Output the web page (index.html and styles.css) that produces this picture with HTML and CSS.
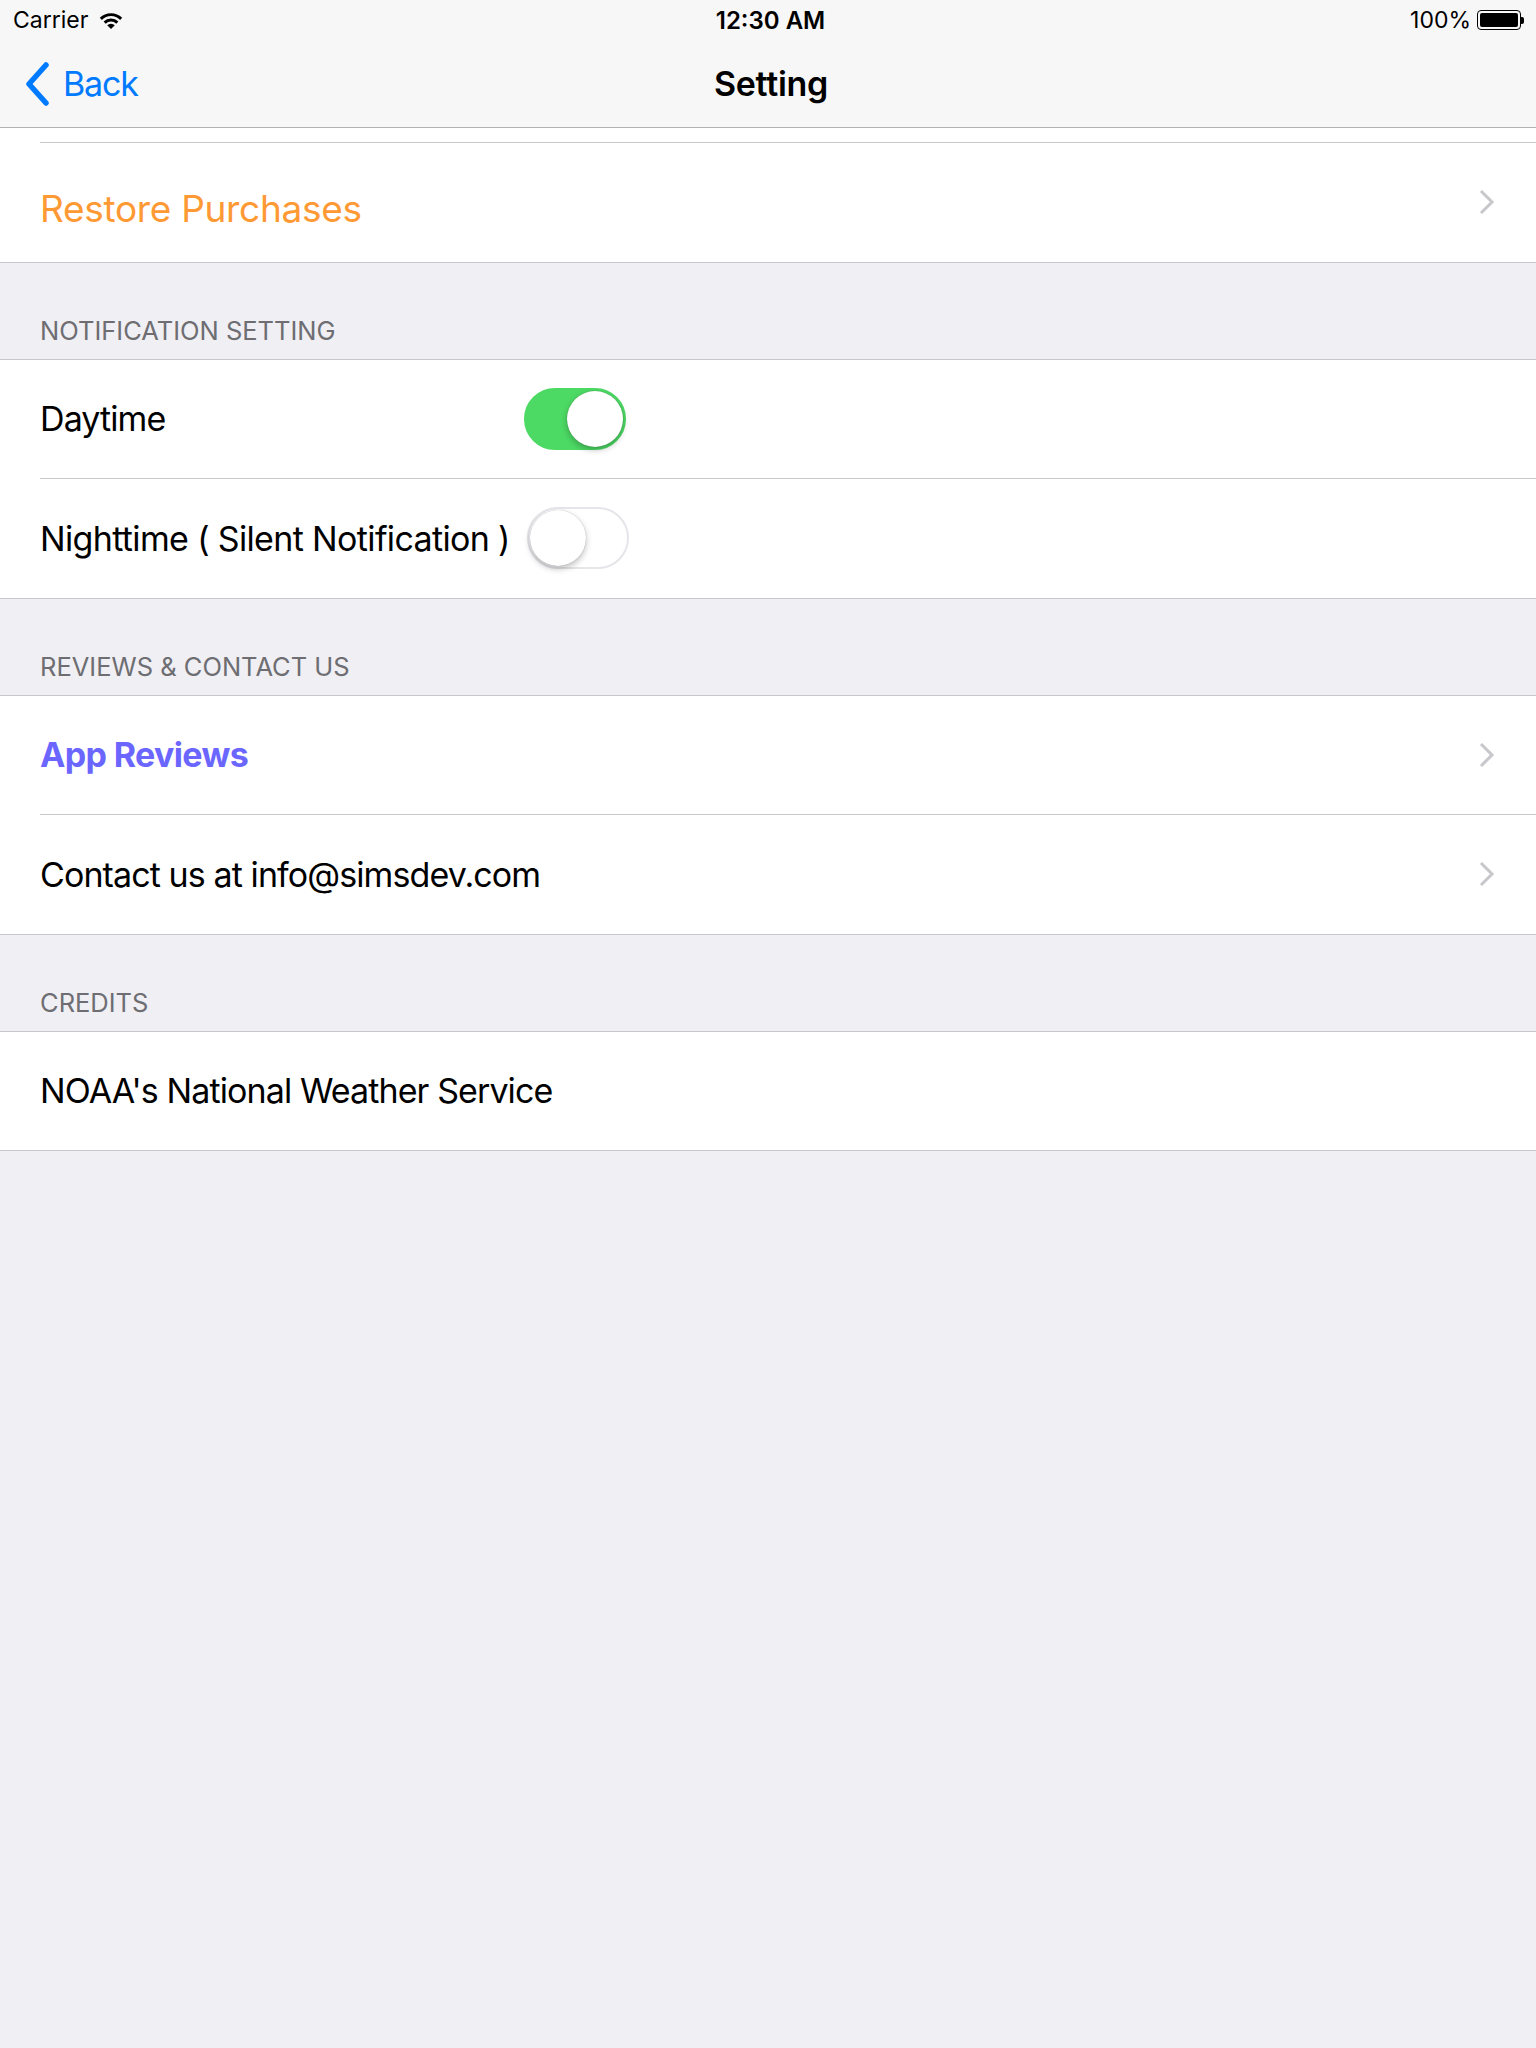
FILE: index.html
```html
<!DOCTYPE html>
<html lang="en">
<head>
    <meta charset="UTF-8">
    <meta name="viewport" content="width=device-width, initial-scale=1.0">
    <title>Setting</title>
    <link rel="stylesheet" href="styles.css">
</head>
<body>
    <div class="status-bar">
        <div class="status-left">
            <span>Carrier</span>
            <svg class="wifi" width="26" height="20" viewBox="0 0 26 20">
                <path d="M13 19 L9.2 15.2 A5.4 5.4 0 0 1 16.8 15.2 Z" fill="#000"/>
                <path d="M5.6 11.6 A10.5 10.5 0 0 1 20.4 11.6 L18.3 13.7 A7.5 7.5 0 0 0 7.7 13.7 Z" fill="#000"/>
                <path d="M1.8 7.8 A15.8 15.8 0 0 1 24.2 7.8 L22.1 9.9 A12.8 12.8 0 0 0 3.9 9.9 Z" fill="#000"/>
            </svg>
        </div>
        <div class="status-time">12:30 AM</div>
        <div class="status-right">
            <span>100%</span>
            <div class="battery"><div class="battery-fill"></div></div>
            <div class="battery-nub"></div>
        </div>
    </div>

    <header class="nav-bar">
        <a class="back-button">
            <svg width="26" height="44" viewBox="0 0 26 44">
                <polyline points="22,3 5,22 22,41" fill="none" stroke="#007aff" stroke-width="5.5" stroke-linecap="round" stroke-linejoin="round"/>
            </svg>
            <span>Back</span>
        </a>
        <h1 class="nav-title">Setting</h1>
    </header>

    <main class="table">
        <div class="group group-scrolled">
            <div class="cell-tail"></div>
            <div class="row">
                <span class="label label-orange">Restore Purchases</span>
                <svg class="chevron" width="16" height="26" viewBox="0 0 16 26">
                    <polyline points="2,2 13,13 2,24" fill="none" stroke="#c7c7cc" stroke-width="3"/>
                </svg>
            </div>
        </div>

        <div class="section-header">NOTIFICATION SETTING</div>
        <div class="group">
            <div class="row switch-row">
                <span class="label">Daytime</span>
                <div class="switch on"><div class="knob"></div></div>
            </div>
            <div class="row switch-row">
                <span class="label label-loose">Nighttime ( Silent Notification )</span>
                <div class="switch"><div class="knob"></div></div>
            </div>
        </div>

        <div class="section-header">REVIEWS &amp; CONTACT US</div>
        <div class="group">
            <div class="row">
                <span class="label label-purple">App Reviews</span>
                <svg class="chevron" width="16" height="26" viewBox="0 0 16 26">
                    <polyline points="2,2 13,13 2,24" fill="none" stroke="#c7c7cc" stroke-width="3"/>
                </svg>
            </div>
            <div class="row">
                <span class="label">Contact us at info@simsdev.com</span>
                <svg class="chevron" width="16" height="26" viewBox="0 0 16 26">
                    <polyline points="2,2 13,13 2,24" fill="none" stroke="#c7c7cc" stroke-width="3"/>
                </svg>
            </div>
        </div>

        <div class="section-header">CREDITS</div>
        <div class="group">
            <div class="row">
                <span class="label">NOAA's National Weather Service</span>
            </div>
        </div>
    </main>
</body>
</html>
```

FILE: styles.css
```css
body {
    margin: 0;
    font-family: Inter, "Noto Sans", sans-serif;
    background-color: #efeff4;
    color: #000;
}

.status-bar {
    height: 40px;
    background-color: #f7f7f7;
    display: grid;
    grid-template-columns: 1fr auto 1fr;
    align-items: center;
    padding: 0 12px 0 13px;
    font-size: 23px;
}

.status-left {
    display: flex;
    align-items: center;
    gap: 10px;
}

.status-time {
    font-size: 24px;
    font-weight: 600;
    padding-left: 4px;
}

.status-right {
    display: flex;
    align-items: center;
    justify-content: flex-end;
}

.status-right span {
    margin-right: 6px;
}

.battery {
    width: 44px;
    height: 20px;
    box-sizing: border-box;
    border: 1.5px solid #000;
    border-radius: 4px;
    padding: 2px;
}

.battery-fill {
    width: 100%;
    height: 100%;
    background-color: #000;
    border-radius: 2px;
}

.battery-nub {
    width: 3px;
    height: 7px;
    background-color: #000;
    border-radius: 0 2px 2px 0;
}

.nav-bar {
    height: 87px;
    background-color: #f7f7f7;
    border-bottom: 1px solid #b2b2b2;
    display: grid;
    grid-template-columns: 1fr auto 1fr;
    align-items: center;
    padding: 0 18px 0 24px;
}

.back-button {
    display: flex;
    align-items: center;
    gap: 13px;
    color: #007aff;
    font-size: 34px;
    letter-spacing: -1.2px;
    cursor: pointer;
}

.nav-title {
    margin: 0;
    font-size: 34px;
    font-weight: 600;
    letter-spacing: -0.3px;
}

.group {
    background-color: #fff;
    border-top: 1px solid #c8c7cc;
    border-bottom: 1px solid #c8c7cc;
}

.group-scrolled {
    border-top: none;
}

.cell-tail {
    height: 14px;
    border-bottom: 1px solid #c8c7cc;
    margin-left: 40px;
}

.row {
    height: 118.5px;
    display: flex;
    align-items: center;
    justify-content: space-between;
    padding: 0 41px 0 40px;
}

.row + .row {
    border-top: 1px solid #c8c7cc;
    margin-left: 40px;
    padding-left: 0;
}

.label {
    font-size: 34px;
    letter-spacing: -0.9px;
    white-space: nowrap;
}

.label-loose {
    letter-spacing: -0.65px;
}

.label-orange {
    color: #ff9933;
    font-size: 37px;
    letter-spacing: -0.3px;
    padding-top: 13px;
}

.label-purple {
    color: #6b66ff;
    font-weight: 700;
    letter-spacing: -0.65px;
}

.switch-row {
    display: grid;
    grid-template-columns: 484px 102px;
    justify-content: start;
}

.row + .switch-row {
    grid-template-columns: 487px 102px;
}

.switch {
    width: 102px;
    height: 62px;
    box-sizing: border-box;
    border-radius: 31px;
    border: 2px solid #e5e5ea;
    background-color: #fff;
    display: flex;
    align-items: center;
    padding: 0 1px;
}

.switch.on {
    background-color: #4cd964;
    border-color: #4cd964;
    justify-content: flex-end;
}

.knob {
    width: 56px;
    height: 56px;
    border-radius: 50%;
    background-color: #fff;
    box-shadow: 0 3px 6px rgba(0, 0, 0, 0.25), 0 0 1px rgba(0, 0, 0, 0.3);
}

.section-header {
    height: 96px;
    box-sizing: border-box;
    display: flex;
    align-items: flex-end;
    padding: 0 40px 13px;
    font-size: 25.5px;
    color: #6d6d72;
}
```
